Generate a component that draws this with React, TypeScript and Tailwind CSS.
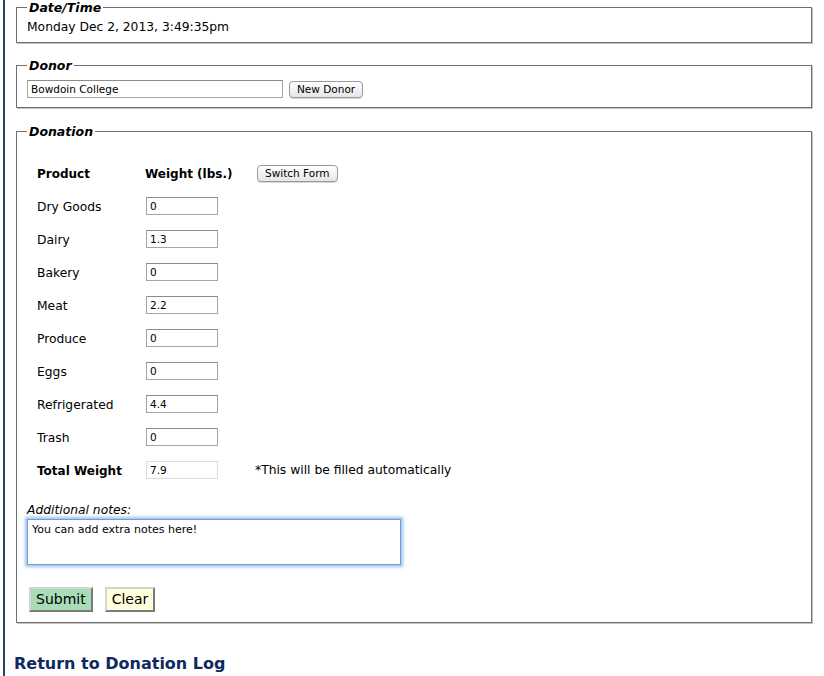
import React from "react";

const rows = [
  { label: "Dry Goods", value: "0" },
  { label: "Dairy", value: "1.3" },
  { label: "Bakery", value: "0" },
  { label: "Meat", value: "2.2" },
  { label: "Produce", value: "0" },
  { label: "Eggs", value: "0" },
  { label: "Refrigerated", value: "4.4" },
  { label: "Trash", value: "0" },
];

const fieldset =
  "border border-solid border-[#6f6f6f] shadow-[1px_1px_0_#c4c4c4] px-[10px] mr-[12px] ml-[11px]";
const legend = "px-[2px] text-[12.5px] leading-[15px] font-bold italic text-black";
const macButton =
  "h-[17px] px-[7px] rounded-[4px] border border-[#9a9a9a] bg-gradient-to-b from-white to-[#e6e6e6] text-[10.5px] leading-[15px] text-black shadow-[0_1px_0_#d8d8d8]";
const weightInput =
  "w-[72px] h-[18px] px-[3px] border border-[#a5a5a5] border-t-[#8c8c8c] text-[10.5px] leading-[16px] text-black bg-white outline-none";

export default function App() {
  return (
    <div className="min-h-screen bg-white font-['DejaVu_Sans',Verdana,sans-serif] text-black">
      <div className="ml-[3px] min-h-[676px] border-l-2 border-[#24426b]">
        <fieldset className={fieldset}>
          <legend className={legend}>Date/Time</legend>
          <div className="pt-[4px] pb-[7px] text-[12.3px] leading-[16px]">Monday Dec 2, 2013, 3:49:35pm</div>
        </fieldset>

        <fieldset className={`${fieldset} mt-[15px]`}>
          <legend className={legend}>Donor</legend>
          <div className="flex items-center gap-[6px] pt-[7px] pb-[9px]">
            <input
              readOnly
              value="Bowdoin College"
              className="w-[256px] h-[18px] px-[3px] border border-[#a5a5a5] border-t-[#8c8c8c] text-[10.5px] leading-[16px] outline-none"
            />
            <button className={macButton}>New Donor</button>
          </div>
        </fieldset>

        <fieldset className={`${fieldset} mt-[16px]`}>
          <legend className={legend}>Donation</legend>
          <div className="pt-[18px] pl-[10px] text-[12.3px]">
            <div className="flex items-center h-[33px]">
              <div className="w-[108px] font-bold text-[12px]">Product</div>
              <div className="w-[112px] font-bold text-[12px]">Weight (lbs.)</div>
              <button className={macButton}>Switch Form</button>
            </div>
            {rows.map((r) => (
              <div key={r.label} className="flex items-center h-[33px]">
                <div className="w-[108px] pt-[1px]">{r.label}</div>
                <div className="pl-[1px]">
                  <input readOnly value={r.value} className={weightInput} />
                </div>
              </div>
            ))}
            <div className="flex items-center h-[33px]">
              <div className="w-[108px] font-bold text-[12px]">Total Weight</div>
              <div className="w-[110px] pl-[1px]">
                <input
                  readOnly
                  value="7.9"
                  className="w-[72px] h-[18px] px-[3px] border border-[#dcdcdc] text-[10.5px] leading-[16px] outline-none"
                />
              </div>
              <div>*This will be filled automatically</div>
            </div>
          </div>

          <div className="mt-[15px] text-[12.3px] leading-[16px] italic">Additional notes:</div>
          <textarea
            readOnly
            value="You can add extra notes here!"
            className="block mt-[1px] w-[374px] h-[46px] px-[4px] pt-[3px] border border-[#6f9fd3] shadow-[0_0_3px_2px_#9cc3eb] text-[11px] leading-[14px] resize-none outline-none"
          />
          <div className="flex items-center gap-[12px] pl-[2px] mt-[22px] pb-[10px]">
            <button className="h-[25px] px-[5px] bg-[#a8dcb6] border-2 border-solid border-t-[#d4d4d4] border-l-[#d4d4d4] border-r-[#7a7a7a] border-b-[#7a7a7a] text-[14px] leading-[19px] text-black">
              Submit
            </button>
            <button className="h-[25px] px-[5px] bg-[#ffffdc] border-2 border-solid border-t-[#d4d4d4] border-l-[#d4d4d4] border-r-[#7a7a7a] border-b-[#7a7a7a] text-[14px] leading-[19px] text-black">
              Clear
            </button>
          </div>
        </fieldset>

        <h3 className="mt-[31px] ml-[9px] text-[16px] leading-[20px] font-bold text-[#0f2a5e]">
          Return to Donation Log
        </h3>
      </div>
    </div>
  );
}
